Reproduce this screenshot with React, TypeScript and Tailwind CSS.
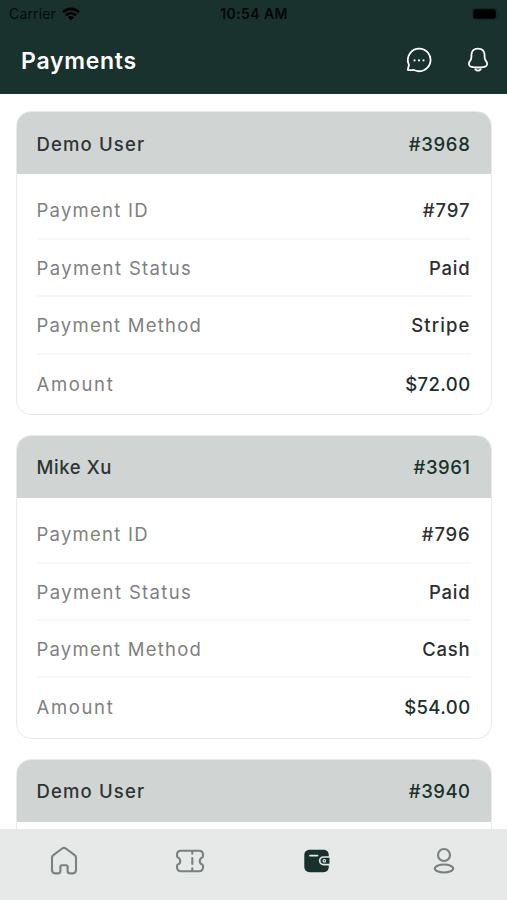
import clsx from 'clsx';

type Detail = {
  label: string;
  value: string;
  labelClass: string;
  valueClass: string;
};

type Payment = {
  customer: string;
  customerClass: string;
  order: string;
  orderClass: string;
  details: Detail[];
};

const label = {
  id: 'tracking-[1.25px]',
  status: 'tracking-[1.36px]',
  method: 'tracking-[1.22px]',
  amount: 'tracking-[1.65px]',
};

const payments: Payment[] = [
  {
    customer: 'Demo User',
    customerClass: 'tracking-[1.15px]',
    order: '#3968',
    orderClass: 'tracking-[0.7px]',
    details: [
      { label: 'Payment ID', value: '#797', labelClass: label.id, valueClass: 'tracking-[0.9px] text-[#2e3030]' },
      { label: 'Payment Status', value: 'Paid', labelClass: label.status, valueClass: 'tracking-[0.8px] text-[#2e3030]' },
      { label: 'Payment Method', value: 'Stripe', labelClass: label.method, valueClass: 'tracking-[1.1px] text-[#2e3030]' },
      { label: 'Amount', value: '$72.00', labelClass: label.amount, valueClass: 'tracking-[0.4px] text-[#18312c]' },
    ],
  },
  {
    customer: 'Mike Xu',
    customerClass: 'tracking-[0.6px]',
    order: '#3961',
    orderClass: 'tracking-[0.5px]',
    details: [
      { label: 'Payment ID', value: '#796', labelClass: label.id, valueClass: 'tracking-[0.8px] text-[#2e3030]' },
      { label: 'Payment Status', value: 'Paid', labelClass: label.status, valueClass: 'tracking-[0.8px] text-[#2e3030]' },
      { label: 'Payment Method', value: 'Cash', labelClass: label.method, valueClass: 'tracking-[0.8px] text-[#2e3030]' },
      { label: 'Amount', value: '$54.00', labelClass: label.amount, valueClass: 'tracking-[0.4px] text-[#18312c]' },
    ],
  },
  {
    customer: 'Demo User',
    customerClass: 'tracking-[1.15px]',
    order: '#3940',
    orderClass: 'tracking-[0.5px]',
    details: [],
  },
];

function StatusBar() {
  return (
    <div className="flex h-7 items-center justify-between pl-[9px] pr-[7px] text-black">
      <div className="flex w-24 items-center gap-[6px]">
        <span className="text-[14px] leading-5 tracking-[0.15px] opacity-75">Carrier</span>
        <svg width="18" height="14" viewBox="0 0 18 14" fill="none" stroke="currentColor" strokeWidth="2.6">
          <path d="M1 5.2a11.4 11.4 0 0 1 16 0" />
          <path d="M3.9 8.4a7.2 7.2 0 0 1 10.2 0" />
          <path d="M9 13.6 5.9 10.5a4.5 4.5 0 0 1 6.2 0z" fill="currentColor" stroke="none" />
        </svg>
      </div>
      <span className="mr-px text-[14px] font-semibold leading-5 tracking-[0.4px] opacity-85">10:54 AM</span>
      <div className="flex w-24 items-center justify-end">
        <svg width="28" height="12" viewBox="0 0 28 12">
          <rect x="0.5" y="0.5" width="24.5" height="11" rx="3" fill="none" stroke="#000" strokeOpacity="0.2" />
          <rect x="1.3" y="1.3" width="22.5" height="9.4" rx="2" fill="#000" />
          <path d="M26.2 4v4c.8-.4 1.2-1.1 1.2-2s-.4-1.6-1.2-2z" fill="#000" fillOpacity="0.3" />
        </svg>
      </div>
    </div>
  );
}

function ChatIcon() {
  return (
    <svg width="26" height="26" viewBox="0 0 26 26" fill="none" stroke="currentColor" strokeWidth="1.8" strokeLinejoin="round">
      <path d="M13.2 1.6a11.3 11.3 0 1 1-4.6 21.6c-.6-.3-1.1-.3-1.7-.1H2.700c-.7 0-1-.4-.8-1l.9-3.300c.2-.7.1-1.200-.2-1.900A11.300 11.300 0 0 1 13.200 1.600z" />
      <path d="M8.500 13.400h.02M13 13.400h.02M17.500 13.400h.02" strokeWidth="2.100" strokeLinecap="round" />
    </svg>
  );
}

function BellIcon() {
  return (
    <svg width="22" height="26" viewBox="0 0 22 26" fill="none" stroke="currentColor" strokeWidth="1.8" strokeLinecap="round" strokeLinejoin="round">
      <path d="M11 1.6c-3.900 0-6.300 2.300-6.500 5.700l-.2 3.700c-.1.900-.3 1.500-.8 2.200l-1 1.600c-1.400 2.400-.5 4.500 2 5 4.300.9 8.700.9 13 0 2.500-.5 3.400-2.600 2-5l-1-1.600c-.5-.7-.7-1.300-.8-2.200l-.2-3.700c-.2-3.400-2.600-5.700-6.500-5.700z" />
      <path d="M8.300 22.200c.7 1 1.600 1.500 2.700 1.500s2-.5 2.700-1.500" />
    </svg>
  );
}

function HomeIcon() {
  return (
    <svg width="28" height="30" viewBox="0 0 28 30" fill="none" stroke="currentColor" strokeWidth="2.1" strokeLinejoin="round">
      <path d="M12.200 2.500 3.300 9.100C2.400 9.800 2 10.600 2 11.700V23.500C2 26 3.500 27.400 5.800 27.400h2.300c1.500 0 2.300-.8 2.300-2.300v-4.300c0-1 .5-1.500 1.500-1.500h4.200c1 0 1.500.5 1.500 1.500v4.300c0 1.500.8 2.300 2.300 2.300h2.300c2.300 0 3.800-1.400 3.800-3.900V11.700c0-1.100-.4-1.900-1.300-2.600l-8.900-6.600c-1.200-.9-2.400-.9-3.600 0z" />
    </svg>
  );
}

function TicketIcon() {
  return (
    <svg width="30" height="24" viewBox="0 0 30 24" fill="none" stroke="currentColor" strokeWidth="2.1" strokeLinecap="round" strokeLinejoin="round">
      <path d="M6 1.800h18c2.700 0 4 1.300 4 4v1.300c0 .8-.3 1.200-1 1.500a3.700 3.700 0 0 0 0 6.800c.7.300 1 .7 1 1.500v1.300c0 2.700-1.300 4-4 4H6c-2.700 0-4-1.300-4-4v-1.300c0-.8.3-1.200 1-1.500a3.700 3.700 0 0 0 0-6.800c-.7-.3-1-.7-1-1.500V5.800c0-2.700 1.300-4 4-4z" />
      <path d="M17.300 2.500v2.200M17.300 9v6M17.300 19.300v2.200" />
    </svg>
  );
}

function WalletIcon() {
  return (
    <svg width="28" height="24" viewBox="0 0 28 24" fill="none">
      <path d="M7 .8h13.500c3.500 0 5.300 2.200 5.300 5.700v11c0 3.500-1.800 5.700-5.300 5.700H7c-3.700 0-5.700-2.200-5.700-5.700v-11C1.300 3 3.300.8 7 .8z" fill="currentColor" />
      <path d="M7 6.600h7.500" stroke="#e6e9e8" strokeWidth="1.8" strokeLinecap="round" />
      <path d="M22 7.800h4.500v7.800H22z" fill="currentColor" />
      <path d="M27.500 8h-7a3.800 3.800 0 0 0 0 7.600h7" stroke="#e6e9e8" strokeWidth="1.7" />
      <circle cx="21.300" cy="11.800" r="1.300" stroke="#e6e9e8" strokeWidth="1.200" />
    </svg>
  );
}

function ProfileIcon() {
  return (
    <svg width="24" height="28" viewBox="0 0 24 28" fill="none" stroke="currentColor" strokeWidth="2.1">
      <circle cx="12" cy="8" r="6" />
      <ellipse cx="12" cy="21.500" rx="9.200" ry="4" />
    </svg>
  );
}

function Row({ detail, last }: { detail: Detail; last: boolean }) {
  return (
    <div className={clsx('flex h-[57.4px] items-center justify-between pt-[2.5px]', !last && 'border-b-2 border-[#f6f7f6]')}>
      <span className={clsx('text-[#808080]', detail.labelClass)}>{detail.label}</span>
      <span className={clsx('font-medium', detail.valueClass)}>{detail.value}</span>
    </div>
  );
}

function PaymentCard({ payment }: { payment: Payment }) {
  return (
    <section className="h-[303.5px] shrink-0 overflow-hidden rounded-[15px] border border-[#e9ebea] bg-white text-[18.5px]">
      <div className="flex h-[62px] items-center justify-between bg-[#d0d5d3] px-5 pt-[2px] font-medium">
        <h2 className={clsx('text-[#2e3433]', payment.customerClass)}>{payment.customer}</h2>
        <span className={clsx('text-[#18312c]', payment.orderClass)}>{payment.order}</span>
      </div>
      <div className="px-5 pt-[8px]">
        {payment.details.map((detail, i) => (
          <Row key={detail.label} detail={detail} last={i === payment.details.length - 1} />
        ))}
      </div>
    </section>
  );
}

export default function App() {
  return (
    <div className="flex h-[900px] w-[507px] flex-col overflow-hidden bg-white font-['Inter',sans-serif]">
      <header className="h-[94px] shrink-0 bg-[#1a322d]">
        <StatusBar />
        <div className="flex h-[64px] items-center justify-between pl-[21px] pr-[18.5px] text-white">
          <h1 className="pt-[2px] text-[23px] font-semibold tracking-[0.75px]">Payments</h1>
          <div className="flex items-center gap-[35px]">
            <ChatIcon />
            <BellIcon />
          </div>
        </div>
      </header>

      <main className="flex min-h-0 flex-1 flex-col gap-[20.3px] overflow-hidden px-[15.5px] pt-[17.4px]">
        {payments.map((payment) => (
          <PaymentCard key={payment.order} payment={payment} />
        ))}
      </main>

      <nav className="grid h-[71px] shrink-0 grid-cols-4 bg-[#e6e9e8] pb-[7px] text-[#788080]">
        <button className="flex items-center justify-center pl-[2px]"><HomeIcon /></button>
        <button className="flex items-center justify-center"><TicketIcon /></button>
        <button className="flex items-center justify-center text-[#18312c]"><WalletIcon /></button>
        <button className="flex items-center justify-center"><ProfileIcon /></button>
      </nav>
    </div>
  );
}
